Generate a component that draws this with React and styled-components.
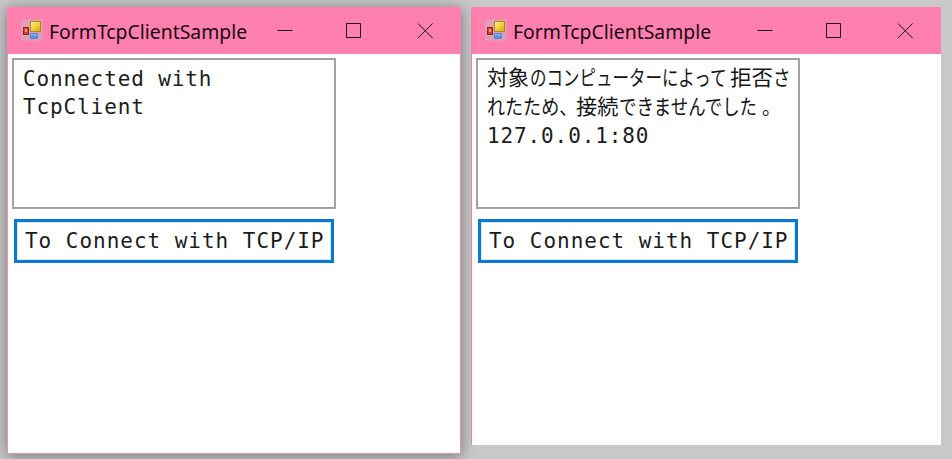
import React from "react";
import styled, { createGlobalStyle } from "styled-components";

const GlobalStyle = createGlobalStyle`
  * { box-sizing: border-box; }
  body { margin: 0; background: #c8c8c8; overflow: hidden; }
`;

const Desktop = styled.main`
  display: flex;
  align-items: flex-start;
  gap: 10px;
  width: 952px;
  height: 459px;
  padding: 7px 0 0 7px;
  background: #c8c8c8;
`;

const Window = styled.section`
  flex: none;
  width: ${(p) => p.$width}px;
  height: ${(p) => p.$height}px;
  background: #fff;
  border-left: 1px solid #e394ac;
  ${(p) =>
    p.$raised &&
    `
    position: relative;
    z-index: 1;
    border-right: 1px solid #e394ac;
    border-bottom: 1px solid #e394ac;
    box-shadow: 0 2px 14px rgba(0, 0, 0, 0.42);
  `}
`;

const TitleBar = styled.header`
  display: flex;
  align-items: center;
  height: 47px;
  margin-left: -1px;
  margin-right: ${(p) => (p.$raised ? -1 : 0)}px;
  padding-left: 14px;
  background: #ff80ae;
`;

const AppIcon = styled.svg`
  flex: none;
  width: 22px;
  height: 22px;
  margin-top: -1px;
`;

const Title = styled.h1`
  flex: none;
  width: 214px;
  margin: 0 0 0 6px;
  font: 400 20.5px/30px "Noto Sans", sans-serif;
  color: #170a10;
  white-space: nowrap;
`;

const TitleText = styled.span`
  display: inline-block;
  transform: scaleX(${(p) => p.$scale});
  transform-origin: left;
`;

const Controls = styled.div`
  display: flex;
  align-items: center;
  margin-left: auto;
  margin-right: 28px;
`;

const ControlIcon = styled.svg`
  display: block;
  width: 16px;
  height: 16px;
  margin-left: ${(p) => p.$gap || 0}px;
  fill: none;
  stroke: #1a0d12;
  stroke-width: 1;
`;

const Content = styled.div`
  display: flex;
  flex-direction: column;
  align-items: flex-start;
  gap: 10px;
  padding: 4px 0 0 4px;
`;

const Message = styled.div`
  width: 324px;
  height: 151px;
  padding: 6px 0 0 10px;
  border: 1px solid #a5a5a5;
  box-shadow: inset 0 0 0 1px #a0a0a0;
  background: #fff;
`;

const monoText = `
  font-family: "DejaVu Sans Mono", monospace;
  font-size: 21px;
  letter-spacing: 0.88px;
  color: #1c1c20;
  white-space: pre;
`;

const MonoLine = styled.div`
  ${monoText}
  height: 28px;
  line-height: 28px;
`;

const JapaneseLines = styled.div`
  height: 57px;
  margin-top: -3px;
  margin-bottom: 3px;
`;

const JapaneseLine = styled.div`
  display: flex;
  height: 28.5px;
  font: 400 21px/28px "Noto Sans CJK JP", sans-serif;
  color: #151515;
  white-space: nowrap;
`;

const Run = styled.span`
  flex: none;
  width: ${(p) => p.$width}px;
`;

const RunText = styled.span`
  display: inline-block;
  transform: scaleX(${(p) => p.$scale});
  transform-origin: left;
`;

const ConnectButton = styled.button`
  ${monoText}
  width: 320px;
  height: 44px;
  margin-left: 2px;
  padding: 0 0 1px 8px;
  letter-spacing: 0.97px;
  border: 3px solid #0d78d0;
  box-shadow: inset 0 0 0 1px #d5ebfa;
  background: #fff;
  text-align: left;
`;

function FormIcon() {
  return (
    <AppIcon viewBox="0 0 22 22">
      <defs>
        <linearGradient id="yellow" x1="0" y1="0" x2="1" y2="1">
          <stop offset="0" stopColor="#ffeda0" />
          <stop offset="0.5" stopColor="#f5cf3c" />
          <stop offset="1" stopColor="#d9a315" />
        </linearGradient>
        <linearGradient id="blue" x1="0" y1="0" x2="0" y2="1">
          <stop offset="0" stopColor="#8fc0fb" />
          <stop offset="1" stopColor="#397fdc" />
        </linearGradient>
      </defs>
      <path d="M1 1H21V21H1ZM1 8H9M1 15H21M9 1V21M17 12V21" fill="#e89ab6" stroke="#d1a9b8" />
      <rect x="2.5" y="8.5" width="5" height="7" fill="#c8443a" stroke="#8d2420" />
      <rect x="4" y="10" width="2" height="3" fill="#ec8f7c" />
      <rect x="9.5" y="2.5" width="10" height="10" fill="url(#yellow)" stroke="#b48620" />
      <rect x="9.5" y="14.5" width="7" height="5" fill="url(#blue)" stroke="#5b8cd0" />
    </AppIcon>
  );
}

function FormWindow({ width, height, raised, children }) {
  return (
    <Window $width={width} $height={height} $raised={raised}>
      <TitleBar $raised={raised}>
        <FormIcon />
        <Title>
          <TitleText $scale={0.945}>FormTcpClientSample</TitleText>
        </Title>
        <Controls>
          <ControlIcon viewBox="0 0 16 16"><path d="M0.5 7.5H15.5" /></ControlIcon>
          <ControlIcon $gap={53} viewBox="0 0 16 16"><path d="M.5 .5H14.5V14.5H.5Z" /></ControlIcon>
          <ControlIcon $gap={55} viewBox="0 0 16 16"><path d="M1 .5L15.5 15M15.5 .5L1 15" /></ControlIcon>
        </Controls>
      </TitleBar>
      <Content>
        <Message>{children}</Message>
        <ConnectButton type="button">To Connect with TCP/IP</ConnectButton>
      </Content>
    </Window>
  );
}

function JapaneseText({ runs }) {
  return (
    <JapaneseLine>
      {runs.map(([text, width, scale]) => (
        <Run key={text} $width={width}>
          <RunText $scale={scale}>{text}</RunText>
        </Run>
      ))}
    </JapaneseLine>
  );
}

const refusedRuns = [
  ["対象", 43, 1],
  ["のコンピューターによって", 200, 0.785],
  ["拒否", 43, 1.02],
  ["さ", 18, 0.83],
];

const failedRuns = [
  ["れたため、", 89, 0.86],
  ["接続", 43, 1.01],
  ["できませんでした", 143, 0.83],
  ["。", 18, 0.9],
];

export default function App() {
  return (
    <>
      <GlobalStyle />
      <Desktop>
        <FormWindow width={454} height={447} raised>
          <MonoLine>Connected with</MonoLine>
          <MonoLine>TcpClient</MonoLine>
        </FormWindow>
        <FormWindow width={470} height={438}>
          <JapaneseLines>
            <JapaneseText runs={refusedRuns} />
            <JapaneseText runs={failedRuns} />
          </JapaneseLines>
          <MonoLine>127.0.0.1:80</MonoLine>
        </FormWindow>
      </Desktop>
    </>
  );
}
